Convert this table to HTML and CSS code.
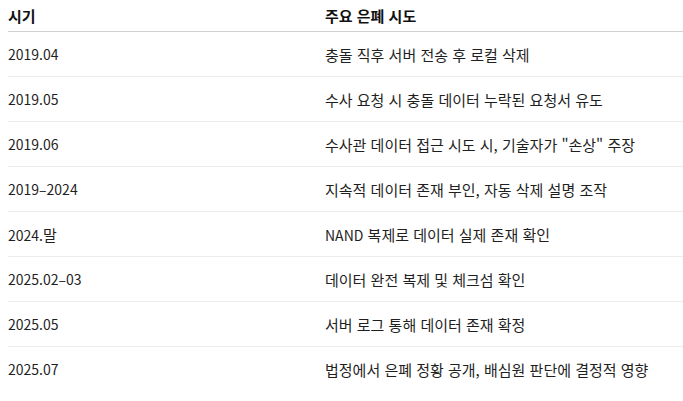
FILE: index.html
```html
<!DOCTYPE html>
<html lang="ko">
<head>
<meta charset="utf-8">
<link rel="stylesheet" href="styles.css">
</head>
<body>
<div class="table">
  <div class="row head"><div class="c1">시기</div><div class="c2">주요 은폐 시도</div></div>
  <div class="row"><div class="c1">2019.04</div><div class="c2">충돌 직후 서버 전송 후 로컬 삭제</div></div>
  <div class="row"><div class="c1">2019.05</div><div class="c2">수사 요청 시 충돌 데이터 누락된 요청서 유도</div></div>
  <div class="row"><div class="c1">2019.06</div><div class="c2">수사관 데이터 접근 시도 시, 기술자가 "손상" 주장</div></div>
  <div class="row"><div class="c1">2019–2024</div><div class="c2">지속적 데이터 존재 부인, 자동 삭제 설명 조작</div></div>
  <div class="row"><div class="c1">2024.<span class="ko">말</span></div><div class="c2"><span class="lat">NAND</span> 복제로 데이터 실제 존재 확인</div></div>
  <div class="row"><div class="c1">2025.02–03</div><div class="c2">데이터 완전 복제 및 체크섬 확인</div></div>
  <div class="row"><div class="c1">2025.05</div><div class="c2">서버 로그 통해 데이터 존재 확정</div></div>
  <div class="row"><div class="c1">2025.07</div><div class="c2">법정에서 은폐 정황 공개, 배심원 판단에 결정적 영향</div></div>
</div>
</body>
</html>
```
FILE: styles.css
```css
html, body {
  margin: 0;
  padding: 0;
  background: #fff;
}
body {
  padding-left: 8px;
  overflow: hidden;
  font-family: "Noto Sans CJK KR", "Noto Sans", sans-serif;
  font-size: 14px;
  color: #1f1f1f;
}
.table {
  display: flex;
  flex-direction: column;
}
.row {
  display: grid;
  grid-template-columns: 317px 1fr;
  height: 44px;
  align-items: center;
  border-bottom: 1px solid #ececec;
}
.row:last-child {
  border-bottom: none;
}
.c2 {
  font-size: 15px;
}
.c2 .lat {
  font-size: 14px;
}
.ko {
  font-size: 15px;
}
.row.head {
  height: 31px;
  font-weight: 700;
  color: #111;
  border-bottom: 1px solid #d0d0d0;
}
.row.head .c1 {
  font-size: 15px;
}
```
